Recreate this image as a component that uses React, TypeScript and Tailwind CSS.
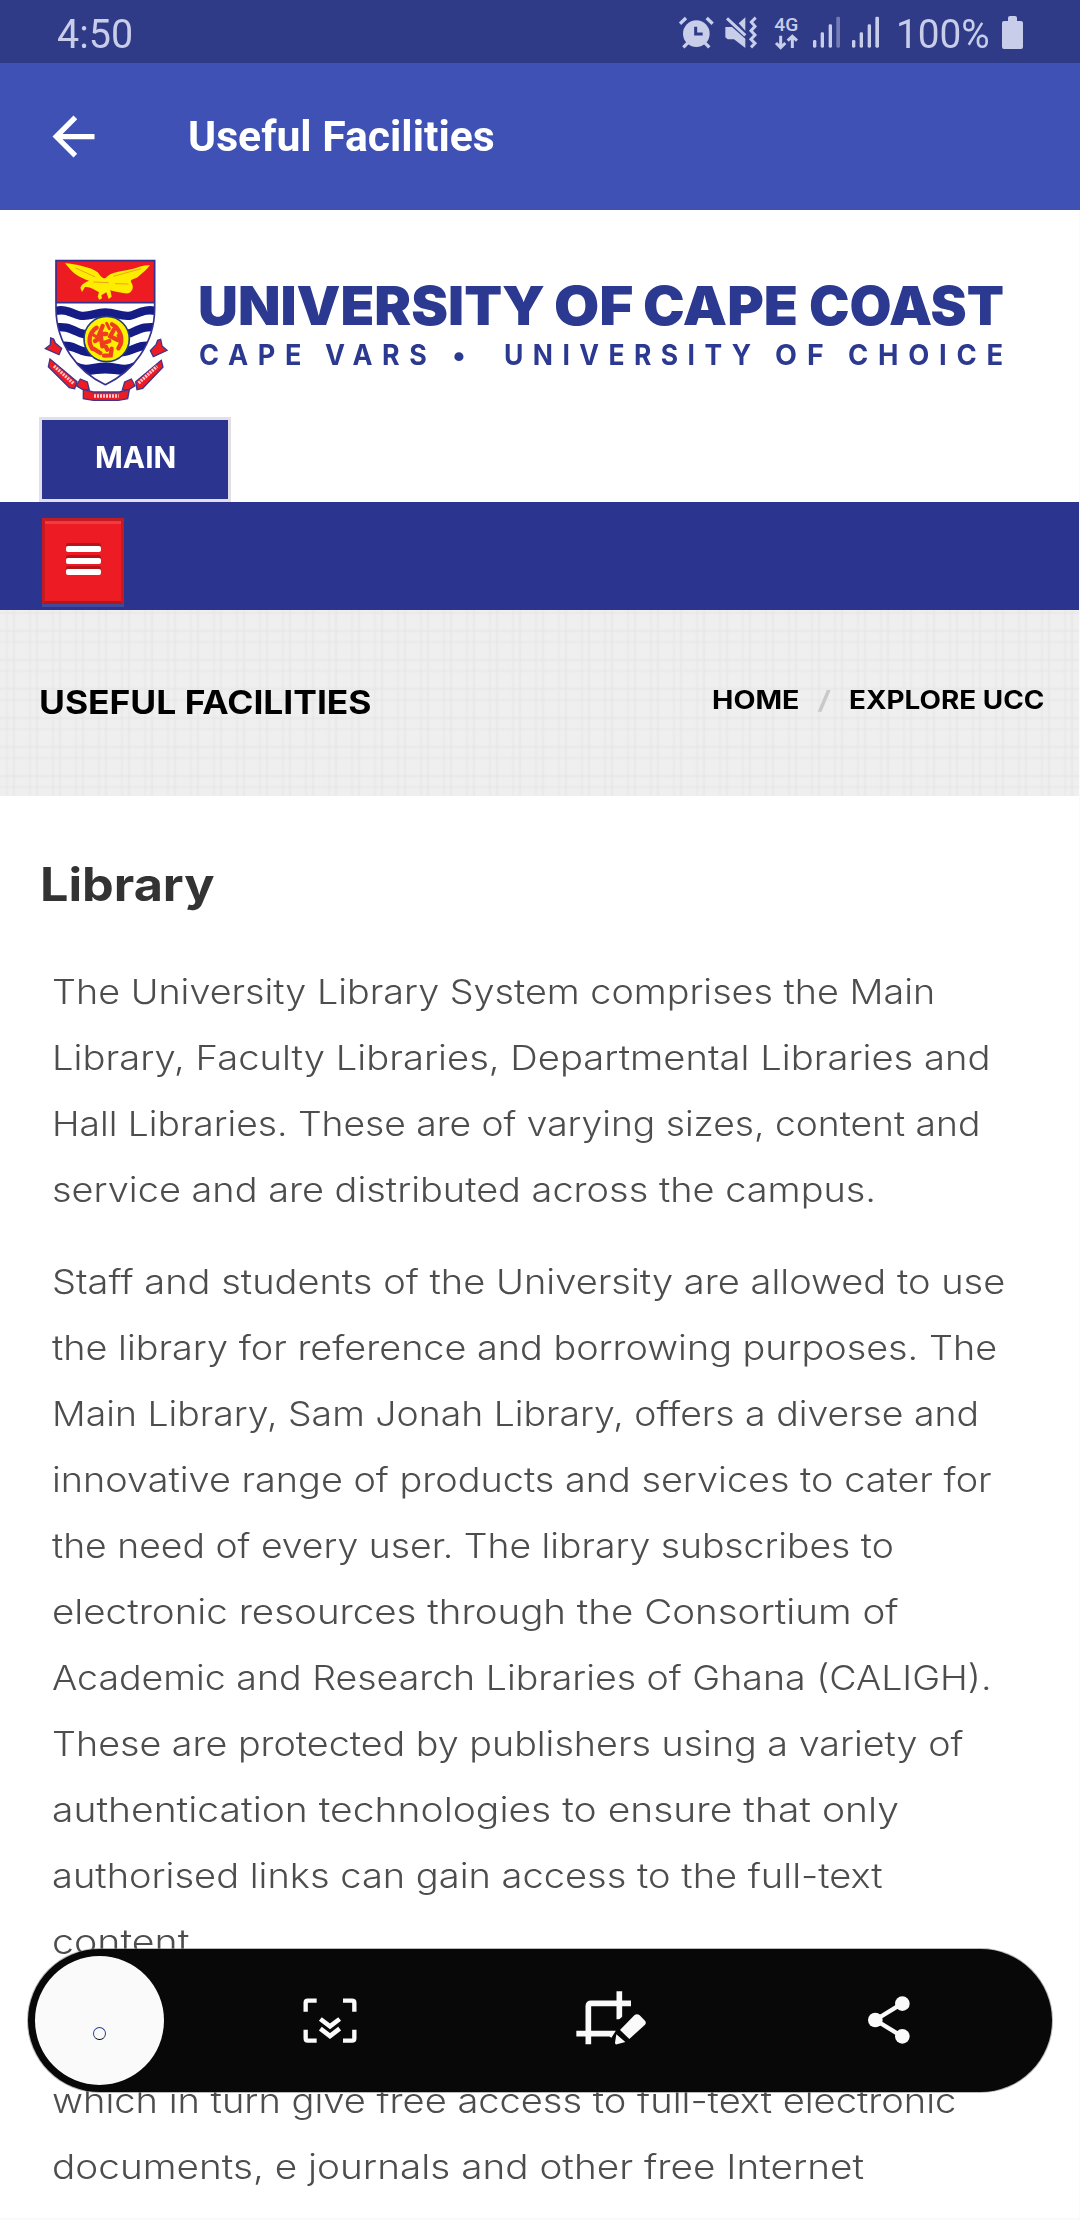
import { useLayoutEffect, useRef, type ReactNode } from "react";

// Stretches a single line of text so that it fills the given width.
function Fit({ width, className = "", children }: { width: number; className?: string; children: ReactNode }) {
  const ref = useRef<HTMLSpanElement>(null);
  useLayoutEffect(() => {
    const el = ref.current;
    if (el) el.style.transform = `scaleX(${width / el.offsetWidth})`;
  }, [width, children]);
  return (
    <span className={"block shrink-0 " + className} style={{ width }}>
      <span ref={ref} className="inline-block origin-left whitespace-nowrap">
        {children}
      </span>
    </span>
  );
}

function StatusIcons() {
  return (
    <svg width="220" height="63" viewBox="0 0 660 189" fill="currentColor" className="shrink-0">
      {/* alarm */}
      <circle cx="109" cy="101" r="40" />
      <path d="M60 71 78 54M158 71 140 54M70 142 84 128M148 142 134 128" stroke="currentColor" strokeWidth="10" />
      <path d="M107 80V102H128" fill="none" stroke="#2f3b86" strokeWidth="9" />
      {/* muted with vibration */}
      <path d="M196 81H216L256 116V144L222 118H203L196 112ZM236 70 256 52V92Z" />
      <path d="M201 55 256 106" stroke="currentColor" strokeWidth="9" />
      <path d="M287 53 274 66 285 79 273 92 285 105 273 118 285 130 273 142" fill="none" stroke="currentColor" strokeWidth="9" />
      {/* network */}
      <text x="343" y="93" fontSize="56" fontWeight="500" fontFamily="Roboto" textLength="72" lengthAdjust="spacingAndGlyphs">4G</text>
      <path d="M362 107V142M348 129 362 143 376 129M397 144V110M383 122 397 109 411 122" fill="none" stroke="currentColor" strokeWidth="9" />
      <rect x="459" y="120" width="10" height="23" rx="4" />
      <rect x="482" y="97" width="10" height="46" rx="4" />
      <rect x="506" y="73" width="10" height="70" rx="4" />
      <rect x="529" y="50" width="11" height="93" rx="4" opacity="0.45" />
      <rect x="576" y="120" width="10" height="23" rx="4" />
      <rect x="599" y="97" width="10" height="46" rx="4" />
      <rect x="623" y="73" width="10" height="70" rx="4" />
      <rect x="646" y="50" width="11" height="93" rx="4" />
    </svg>
  );
}

function Crest() {
  return (
    <svg width="160" height="177" viewBox="0 0 480 531" className="shrink-0">
      <defs>
        <clipPath id="shield">
          <path d="M78 62H374V205C374 310 310 395 226 434C142 395 78 310 78 205Z" />
        </clipPath>
        <filter id="soft"><feGaussianBlur stdDeviation="2.2" /></filter>
      </defs>
      <g filter="url(#soft)">
        <g clipPath="url(#shield)">
          <rect x="70" y="55" width="320" height="390" fill="#fff" />
          <rect x="70" y="55" width="320" height="133" fill="#ed1c24" />
          <path d="M70 188H385" stroke="#35308f" strokeWidth="5" />
          <g fill="none" stroke="#131a86" strokeWidth="25">
            <path d="M70 214C105 205 120 217 150 227C180 232 195 217 226 217C257 217 272 232 302 227C332 217 347 205 385 214" />
            <path d="M70 263C105 257 120 266 150 279C180 290 272 290 302 279C332 266 347 257 385 263" />
            <path d="M90 319C115 312 135 325 155 332C190 342 262 342 297 332C317 325 337 312 365 319" />
            <path d="M135 378C170 396 190 380 226 380C262 380 282 396 317 378" />
            <path d="M175 398C205 392 245 392 280 398" strokeWidth="14" />
          </g>
        </g>
        <path d="M78 62H374V205C374 310 310 395 226 434C142 395 78 310 78 205Z" fill="none" stroke="#35308f" strokeWidth="5" />
        <path d="M105 70C135 72 185 82 203 97C212 108 216 116 226 115C242 92 285 94 310 86C330 80 345 74 360 76C350 90 335 101 326 109C318 118 300 116 303 126C316 143 304 164 284 160C266 158 250 153 241 151L245 170 236 177 229 157 214 166 216 175 208 179 203 170 207 157C193 148 179 139 165 141L156 156 151 143C155 132 165 126 177 122C154 116 132 101 123 91Z" fill="#ffed00" />
        <path d="M137 84 196 111M190 126 236 128M250 109 333 86M255 131 295 132" stroke="#e7a41c" strokeWidth="3" />
        <circle cx="230" cy="297" r="68" fill="#fff200" stroke="#203b7b" strokeWidth="5" />
        <g fill="none" stroke="#f03d22" strokeWidth="13" strokeLinecap="round">
          <path d="M200 263C175 280 174 307 187 326M246 253C270 265 284 300 265 325M218 258 208 282 229 282M195 303 213 293 217 319M222 347 242 346 245 326M251 270 241 289 263 300M238 303 222 309 232 329M190 326 211 339" />
          <path d="M189 284 206 295M264 286 274 311M230 250 238 266" strokeWidth="9" />
        </g>
        <g fill="#ed1c24" stroke="#40358c" strokeWidth="4">
          <path d="M62 294 71 297 76 309 95 325 87 344 46 326 61 314Z" />
          <path d="M392 298 383 301 378 314 361 332 370 350 411 331 396 318Z" />
          <path d="M60 357 141 425 134 446 118 443 55 380Z" />
          <path d="M394 361 317 425 321 449 338 445 399 381Z" />
          <path d="M151 417 172 426 178 450 157 448 139 437Z" />
          <path d="M304 417 284 426 277 450 298 448 315 437Z" />
          <path d="M160 449 190 456H268L298 449 293 476 265 481H190L160 476Z" />
        </g>
        <g stroke="#ffc9cc" strokeWidth="10" strokeDasharray="6 3">
          <path d="M72 378 130 430M326 429 381 379M192 468H266" />
        </g>
      </g>
    </svg>
  );
}

type Line = [string, number];

const intro: Line[] = [
  ["The University Library System comprises the Main", 883],
  ["Library, Faculty Libraries, Departmental Libraries and", 938],
  ["Hall Libraries. These are of varying sizes, content and", 928],
  ["service and are distributed across the campus.", 824],
];

const access: Line[] = [
  ["Staff and students of the University are allowed to use", 953],
  ["the library for reference and borrowing purposes. The", 945],
  ["Main Library, Sam Jonah Library, offers a diverse and", 927],
  ["innovative range of products and services to cater for", 940],
  ["the need of every user. The library subscribes to", 842],
  ["electronic resources through the Consortium of", 846],
  ["Academic and Research Libraries of Ghana (CALIGH).", 940],
  ["These are protected by publishers using a variety of", 911],
  ["authentication technologies to ensure that only", 847],
  ["authorised links can gain access to the full-text", 831],
  ["content.", 148],
];

const links: Line[] = [
  ["which in turn give free access to full-text electronic", 904],
  ["documents, e journals and other free Internet", 812],
];

function Paragraph({ lines, className = "" }: { lines: Line[]; className?: string }) {
  return (
    <p className={"text-[34px] leading-[66px] font-light text-[#4d4d4d] " + className}>
      {lines.map(([text, width]) => (
        <Fit key={text} width={width}>{text}</Fit>
      ))}
    </p>
  );
}

function CaptureToolbar() {
  return (
    <div className="absolute top-[1949px] left-[28px] flex h-[143px] w-[1024px] items-center rounded-full bg-[#080808] pl-[7px] text-[#fafafa] ring-1 ring-[#8a8a8a]/60">
      <div className="flex size-[129px] items-center justify-center rounded-full bg-[#fafafa] pt-[26px]">
        <div className="size-[13px] rounded-full border border-[#2c3f94] border-b-black" />
      </div>
      <svg width="54" height="45" viewBox="0 0 162 135" fill="none" stroke="currentColor" strokeWidth="13" className="ml-[139px]">
        <path d="M8 41V14Q8 8 14 8H41M120 8H147Q154 8 154 14V41M8 95V121Q8 128 14 128H41M120 128H147Q154 128 154 121V95" />
        <path d="M52 63 81 85 110 63M52 92 81 114 110 92" strokeWidth="14" />
      </svg>
      <svg width="70" height="54" viewBox="0 0 210 162" fill="none" stroke="currentColor" strokeWidth="17" className="-mt-[5px] ml-[219px]">
        <path d="M37 160V46Q37 37 46 37H165M1 128H104L99 136M130 1V85" />
        <path d="M120 94 140 76V110Z" fill="#080808" stroke="none" />
        <path d="M132 117 175 73Q183 66 191 73L207 89Q212 95 207 101L160 144ZM121 130 148 153 123 160Q117 161 117 155Z" fill="currentColor" stroke="none" />
      </svg>
      <svg width="42" height="48" viewBox="0 0 126 144" fill="currentColor" className="-mt-px ml-[222px]">
        <path d="M102 23 22 72 102 121" fill="none" stroke="currentColor" strokeWidth="13" />
        <circle cx="103" cy="23" r="22" />
        <circle cx="22" cy="72" r="22" />
        <circle cx="103" cy="121" r="22" />
      </svg>
    </div>
  );
}

export default function App() {
  return (
    <div className="relative h-[2220px] w-[1080px] overflow-hidden bg-[#fafafa] font-['Inter',sans-serif]">
      <div className="flex h-[63px] items-center bg-[#2f3b86] pt-[7px] pl-[57px] font-['Roboto',sans-serif] text-[40px] leading-none text-[#c8cde9]">
        <Fit width={76}>4:50</Fit>
        <div className="-mt-[7px] ml-[527px]"><StatusIcons /></div>
        <Fit width={94} className="ml-[16px]">100%</Fit>
        <svg width="21" height="33" viewBox="0 0 21 33" fill="currentColor" className="-mt-[5px] ml-[12px]">
          <path d="M6 2Q6 0 8 0H13Q15 0 15 2V5H19Q21 5 21 7V31Q21 33 19 33H2Q0 33 0 31V7Q0 5 2 5H6Z" />
        </svg>
      </div>

      <div className="flex h-[147px] items-center bg-[#3f51b5] pl-[42px] font-['Roboto',sans-serif] text-white">
        <svg width="63" height="63" viewBox="0 0 24 24" fill="currentColor">
          <path d="M20 11H7.83l5.59-5.59L12 4l-8 8 8 8 1.41-1.41L7.83 13H20v-2z" />
        </svg>
        <Fit width={307} className="ml-[83px] text-[42px] leading-none font-bold">Useful Facilities</Fit>
      </div>

      <div className="h-[2008px] w-[1079px] bg-white">
        <header className="h-[292px] pt-[30px]">
          <div className="flex h-[177px] pl-[30px]">
            <Crest />
            <div className="ml-[8px] pt-[33px] text-[#2b3990]">
              <div className="flex text-[54px] leading-[65px] font-black">
                <Fit width={347}>UNIVERSITY</Fit>
                <Fit width={79} className="ml-[9px]">OF</Fit>
                <Fit width={155} className="ml-[10px]">CAPE</Fit>
                <Fit width={195} className="ml-[11px]">COAST</Fit>
              </div>
              <div className="flex text-[28px] leading-[34px] font-bold tracking-[10px]">
                <Fit width={112} className="ml-[1px]">CAPE</Fit>
                <Fit width={111} className="ml-[14px]">VARS</Fit>
                <Fit width={24} className="ml-[16px]">•</Fit>
                <Fit width={257} className="ml-[28px]">UNIVERSITY</Fit>
                <Fit width={59} className="ml-[14px]">OF</Fit>
                <Fit width={165} className="ml-[14px]">CHOICE</Fit>
              </div>
            </div>
          </div>
          <div className="ml-[39px] flex h-[85px] w-[192px] items-center justify-center border-[3px] border-[#e2e0e6] bg-[#2b358f] pb-[4px] text-[29.5px] font-bold text-white">
            <Fit width={81}>MAIN</Fit>
          </div>
        </header>

        <nav className="h-[108px] bg-[#2b358f] pt-[16px] pl-[42px]">
          <div className="flex h-[86px] w-[82px] flex-col items-center gap-[5.5px] border-[3px] border-[#c41b22] border-b-[#b5161c] bg-[#ed1c24] pt-[25px] shadow-[inset_0_3px_0_#ef3b42,0_3px_0_#40499a]">
            <i className="h-[6px] w-[35px] rounded-[2px] bg-white shadow-[0_-3px_0_#b3151b]" />
            <i className="h-[6px] w-[35px] rounded-[2px] bg-white shadow-[0_-3px_0_#b3151b]" />
            <i className="h-[6px] w-[35px] rounded-[2px] bg-white shadow-[0_-3px_0_#b3151b]" />
          </div>
        </nav>

        <div className="h-[186px] bg-[#efefef] bg-[repeating-linear-gradient(90deg,transparent_0_5px,#e4e4e480_7px,transparent_9px_12px,#e4e4e4a0_14px,transparent_16px_23px),repeating-linear-gradient(0deg,transparent_0_7px,#e4e4e480_9px,transparent_11px_18px,#e4e4e4a0_20px,transparent_22px_29px)]">
          <div className="flex h-full items-center pl-[39px] font-bold text-black">
            <Fit width={333} className="text-[32px] leading-[40px]">USEFUL FACILITIES</Fit>
            <div className="ml-[340px] flex pb-[6px] text-[25px] leading-[32px]">
              <Fit width={87}>HOME</Fit>
              <Fit width={14} className="ml-[18px] font-medium text-[#c9c9c9]">/</Fit>
              <Fit width={195} className="ml-[18px]">EXPLORE UCC</Fit>
            </div>
          </div>
        </div>

        <main className="pl-[40px]">
          <h1 className="pt-[60px] text-[46px] leading-[56px] font-bold text-[#333333]">
            <Fit width={174}>Library</Fit>
          </h1>
          <div className="flex flex-col gap-[26px] pt-[47px] pl-[12px]">
            <Paragraph lines={intro} />
            <Paragraph lines={access} />
            <Paragraph lines={links} className="pt-[67px]" />
          </div>
        </main>
      </div>

      <CaptureToolbar />
    </div>
  );
}
